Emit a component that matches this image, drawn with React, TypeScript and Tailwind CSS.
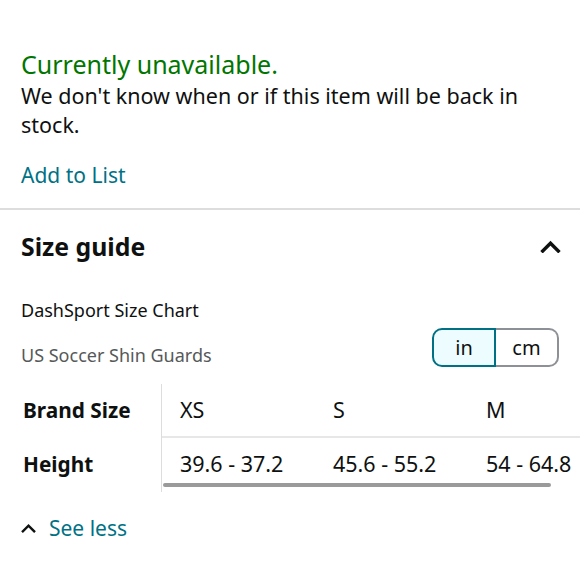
import React, { useState } from 'react';

const font = { fontFamily: '"Noto Sans", "Open Sans", sans-serif' };

const sizes = [
  { size: 'XS', height: '39.6 - 37.2' },
  { size: 'S', height: '45.6 - 55.2' },
  { size: 'M', height: '54 - 64.8' },
];

const ChevronUp = ({ className }: { className?: string }) => (
  <svg viewBox="0 0 16 10" className={className} fill="none" stroke="currentColor" strokeWidth={2.6} strokeLinecap="square">
    <path d="M2 8.5 L8 2.5 L14 8.5" />
  </svg>
);

export default function App() {
  const [unit, setUnit] = useState<'in' | 'cm'>('in');

  return (
    <div className="w-[580px] h-[580px] overflow-hidden bg-white text-[#0f1111]" style={font}>
      {/* Availability */}
      <div className="pl-[21px] pr-[30px] pt-[48px] pb-[18px]">
        <div className="text-[25px] leading-[32px] text-[#007600]">Currently unavailable.</div>
        <p className="text-[21.5px] leading-[29px] mt-[1px]">We don't know when or if this item will be back in stock.</p>
        <a className="block text-[21px] leading-[29px] text-[#007185] mt-[22px]">Add to List</a>
      </div>

      <div className="h-[2px] bg-[#dddddd]" />

      {/* Size guide */}
      <div className="px-[21px] pt-[18px]">
        <div className="flex items-center justify-between">
          <h2 className="text-[24.8px] leading-[36px] font-bold">Size guide</h2>
          <ChevronUp className="w-[21px] h-[13px] mr-[-2px] text-[#0f1111]" />
        </div>

        <div className="mt-[33px] text-[18px] leading-[26px]">DashSport Size Chart</div>
        <div className="flex items-start justify-between mt-[5px]">
          <div className="text-[18px] leading-[26px] text-[#565959] mt-[14px]">US Soccer Shin Guards</div>
          <div className="flex h-[39px]">
            <button
              onClick={() => setUnit('in')}
              className={`w-[64px] rounded-l-[10px] border-2 text-[20px] ${unit === 'in' ? 'border-[#007185] bg-[#edfdff]' : 'border-[#8d9096] bg-white'}`}
            >
              in
            </button>
            <button
              onClick={() => setUnit('cm')}
              className={`w-[63px] rounded-r-[10px] border-2 border-l-0 text-[20px] ${unit === 'cm' ? 'border-[#007185] bg-[#edfdff]' : 'border-[#8d9096] bg-white'}`}
            >
              cm
            </button>
          </div>
        </div>
      </div>

      {/* Table */}
      <div className="flex mt-[16px]">
        <div className="w-[161px] shrink-0 pl-[23px] text-[20.8px] font-bold">
          <div className="h-[54px] flex items-center">Brand Size</div>
          <div className="h-[54px] flex items-center">Height</div>
        </div>
        <div className="flex-1 border-l border-[#dddddd] relative">
          <div className="flex h-[54px] items-center border-b-2 border-[#e7e7e7] text-[21.5px]">
            {sizes.map((s) => (
              <div key={s.size} className="w-[153px] shrink-0 pl-[18px]">{s.size}</div>
            ))}
          </div>
          <div className="flex h-[53px] items-center text-[21.5px] whitespace-nowrap">
            {sizes.map((s) => (
              <div key={s.size} className="w-[153px] shrink-0 pl-[18px]">{s.height}</div>
            ))}
          </div>
          <div className="absolute left-[1px] bottom-[5px] w-[388px] h-[4px] rounded-full bg-[#9a9a9a]" />
        </div>
      </div>

      {/* See less */}
      <div className="flex items-center px-[21px] mt-[22px]">
        <ChevronUp className="w-[15px] h-[10px] text-[#0f1111]" />
        <span className="ml-[13px] text-[21px] leading-[28px] text-[#007185]">See less</span>
      </div>
    </div>
  );
}
